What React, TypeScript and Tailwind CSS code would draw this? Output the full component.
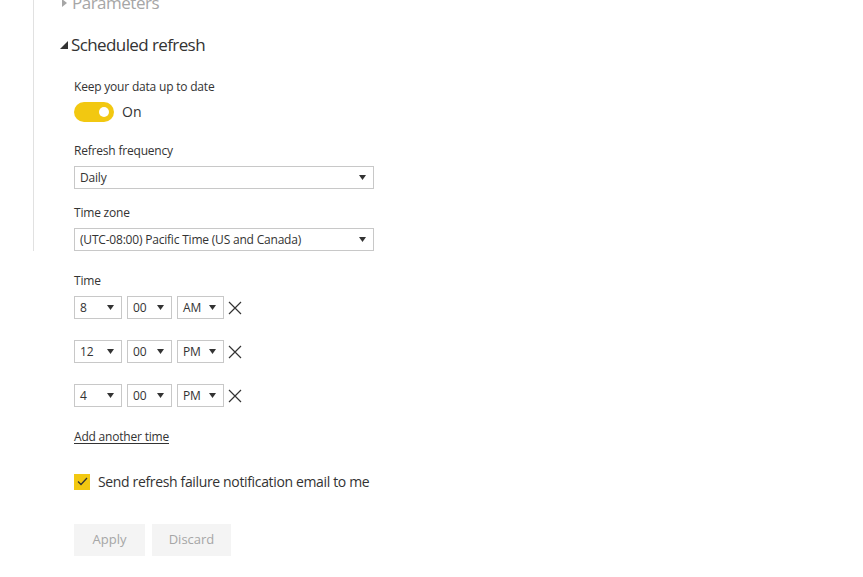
import React, { useState } from 'react';

const font = { fontFamily: '"Open Sans", "Noto Sans", sans-serif' };

const Caret = () => (
  <svg width="7" height="5" viewBox="0 0 7 5" className="shrink-0">
    <path d="M0 0h7L3.5 5z" fill="#333" />
  </svg>
);

const Select: React.FC<{ value: string; className?: string }> = ({ value, className }) => (
  <div
    className={`flex items-center justify-between h-[23px] border border-[#c8c8c8] bg-white pl-[5px] pr-[7px] text-[12px] text-[#333] ${className ?? ''}`}
  >
    <span className="tracking-[-0.2px]">{value}</span>
    <Caret />
  </div>
);

const TimeRow: React.FC<{ h: string; m: string; p: string }> = ({ h, m, p }) => (
  <div className="flex items-center gap-[5px]">
    <Select value={h} className="w-[48px]" />
    <Select value={m} className="w-[45px]" />
    <Select value={p} className="w-[47px]" />
    <svg width="14" height="14" viewBox="0 0 14 14" className="ml-[-1px]">
      <path d="M1 1l12 12M13 1L1 13" stroke="#333" strokeWidth="1.2" />
    </svg>
  </div>
);

export default function App() {
  const [on, setOn] = useState(true);
  const [notify, setNotify] = useState(true);

  return (
    <div className="w-[863px] h-[577px] overflow-hidden bg-white pl-[33px]" style={font}>
      <div className="border-l border-[#e1e1e1] pl-[26px]">
        <div className="flex items-center gap-[4px] mt-[-9px] h-[24px] text-[17px] text-[#a6a6a6]">
          <svg width="5" height="8" viewBox="0 0 5 8" className="ml-[2px] mr-[1px]">
            <path d="M0 0l5 4-5 4z" fill="#a6a6a6" />
          </svg>
          <span className="tracking-[-0.5px]">Parameters</span>
        </div>

        <div className="flex items-center gap-[3px] mt-[18px] h-[24px] text-[17px] text-[#333]">
          <svg width="8" height="8" viewBox="0 0 8 8">
            <path d="M8 0v8H0z" fill="#333" />
          </svg>
          <span className="tracking-[-0.6px]">Scheduled refresh</span>
        </div>

        <div className="pl-[14px]">
          <div className="mt-[22px] text-[12px] leading-[16px] text-[#333] tracking-[-0.2px]">
            Keep your data up to date
          </div>
          <div className="flex items-center gap-[8px] mt-[6px]">
            <button
              onClick={() => setOn(!on)}
              className="flex items-center justify-end w-[40px] h-[20px] rounded-full bg-[#f2c811] pr-[5px]"
            >
              <span className="block w-[10px] h-[10px] rounded-full bg-white" />
            </button>
            <span className="text-[14px] text-[#333]">{on ? 'On' : 'Off'}</span>
          </div>

          <div className="mt-[21px] text-[12px] leading-[16px] text-[#333] tracking-[-0.2px]">Refresh frequency</div>
          <Select value="Daily" className="w-[300px] mt-[7px]" />

          <div className="mt-[16px] text-[12px] leading-[16px] text-[#333] tracking-[-0.2px]">Time zone</div>
          <Select value="(UTC-08:00) Pacific Time (US and Canada)" className="w-[300px] mt-[7px]" />
        </div>
      </div>

      <div className="pl-[41px]">
        <div className="mt-[22px] text-[12px] leading-[16px] text-[#333] tracking-[-0.2px]">Time</div>
        <div className="flex flex-col gap-[21px] mt-[7px]">
          <TimeRow h="8" m="00" p="AM" />
          <TimeRow h="12" m="00" p="PM" />
          <TimeRow h="4" m="00" p="PM" />
        </div>

        <div className="mt-[22px] text-[12px] leading-[16px] text-[#333] underline underline-offset-2 tracking-[-0.2px]">
          Add another time
        </div>

        <div className="flex items-center gap-[8px] mt-[26px]">
          <button
            onClick={() => setNotify(!notify)}
            className="flex items-center justify-center w-[16px] h-[16px] bg-[#f2c811]"
          >
            {notify && (
              <svg width="11" height="9" viewBox="0 0 11 9">
                <path d="M1 4.5l3 3L10 1" stroke="#333" strokeWidth="1.3" fill="none" />
              </svg>
            )}
          </button>
          <span className="text-[14px] text-[#333] tracking-[-0.35px]">Send refresh failure notification email to me</span>
        </div>

        <div className="flex gap-[7px] mt-[32px]">
          <button className="w-[71px] h-[32px] bg-[#f4f4f4] text-[13px] text-[#a6a6a6]">Apply</button>
          <button className="w-[79px] h-[32px] bg-[#f4f4f4] text-[13px] text-[#a6a6a6]">Discard</button>
        </div>
      </div>
    </div>
  );
}
